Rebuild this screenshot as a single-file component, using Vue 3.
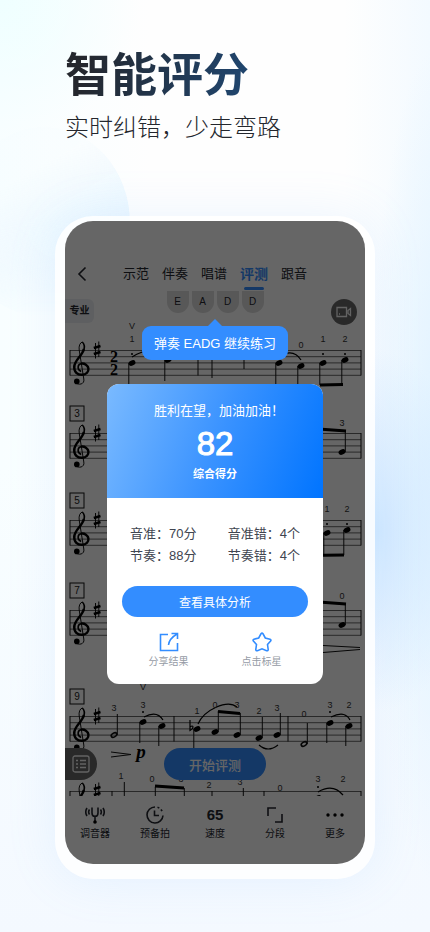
<template>
  <main class="page">
    <header class="intro">
      <h1 class="intro-title">智能评分</h1>
      <p class="intro-text">实时纠错，少走弯路</p>
    </header>

    <section class="phone">
      <div class="screen">
        <nav class="nav">
          <button class="back" aria-label="返回">
            <svg viewBox="0 0 10 16" width="10" height="16">
              <path d="M8.5 1.500 2 8l6.500 6.500" class="line" />
            </svg>
          </button>
          <a
            v-for="tab in tabs"
            :key="tab"
            href="#"
            class="tab"
            :class="{ active: tab === currentTab }"
            @click.prevent="currentTab = tab"
          >{{ tab }}</a>
        </nav>

        <div class="strings">
          <span v-for="(s, i) in strings" :key="i" class="string">{{ s }}</span>
        </div>

        <div class="score">
          <svg class="sheet" viewBox="0 0 300 480">
            <defs>
              <g id="clef">
                <path class="thin" d="M10.800 29C12 34.500 5 35.500 3 32.500M10.800 29 6.200 0C5.600-4 7-7.300 9.300-8" />
                <path class="mid" d="M9.300-8C11.500-6 11.800-2.500 10.500 1" />
                <path class="fat" d="M10.800-1C9.500 6 1.600 9.500 1.200 17" />
                <path class="fat" d="M1.200 16.500C1 22 4.500 25 9 24.800S15.800 21.500 15.400 18.500 11.500 13 8.300 13.600" />
                <path class="mid" d="M8.800 13.600C4 14 4 20 8.200 21.600" />
                <circle cx="3.800" cy="31.400" r="2.800" />
              </g>
              <g id="sharp">
                <path class="thin" d="M-1.500-7V8.500M1.800-8.500V7" />
                <path class="fat" d="M-3.200-2 3.500-4M-3.200 4 3.500 2" />
              </g>
              <ellipse id="head" rx="3.600" ry="2.600" transform="rotate(-25)" />
              <ellipse id="half" class="mid hollow" rx="3" ry="1.900" transform="rotate(-30)" />
            </defs>

            <g v-for="row in rows" :key="row.top">
              <path class="staff" :d="staffPath(row.top)" />
              <path class="bar" :d="barPath(row)" />
              <use href="#clef" x="8" :y="row.top" />
              <use href="#sharp" x="32" :y="row.top" />
              <g v-if="row.no">
                <rect class="box" x="5" :y="row.top - 27" width="14" height="15" />
                <text class="number" x="12" :y="row.top - 16">{{ row.no }}</text>
              </g>
              <g v-for="(n, i) in row.notes" :key="i">
                <use :href="n.half ? '#half' : '#head'" :x="n.x" :y="n.y" />
                <path class="stem" :d="stemPath(n)" />
                <circle v-if="n.dot" :cx="n.x" :cy="n.dot" r="1" />
              </g>
              <path v-for="b in row.beams" :key="b" class="beam" :d="b" />
              <path v-for="s in row.slurs" :key="s" class="slur" :d="s" />
              <text v-for="([t, x, y], i) in row.fingers" :key="'f' + i" class="finger" :x="x" :y="y">{{ t }}</text>
            </g>

            <text class="meter" x="49" y="46">2</text>
            <text class="meter" x="49" y="59">2</text>
            <path class="stem" d="M147 40V62M179 40V53" />
            <path class="thin" d="M258 329.500 295 331.500M258 336.500 295 333.500" />
            <path class="thin" d="M46 436 66 438.500 46 441" />
            <path class="slur" d="M125 404V414.500C129 412.500 129 408 125 411" />
            <text class="dynamic" x="76" y="442">p</text>
          </svg>

          <span class="level">专业</span>
          <button class="camera" aria-label="录像">
            <svg viewBox="0 0 16 12" width="16" height="12">
              <path d="M1 1.500H10.500V10.500H1ZM12 4.500 14.500 2.500V9.500L12 7.500ZM3 8H4" />
            </svg>
          </button>
          <button class="list" aria-label="目录">
            <svg viewBox="0 0 18 18" width="18" height="18">
              <rect x="1" y="1" width="16" height="16" rx="2" />
              <path d="M4 5.500H6M8 5.500H14M4 9H6M8 9H14M4 12.500H6M8 12.500H14" />
            </svg>
          </button>
          <button class="start">开始评测</button>
        </div>

        <footer class="tools">
          <button class="tool">
            <svg viewBox="0 0 20 18" width="20" height="18">
              <path class="line" d="M7 1.500V7C7 11.500 13 11.500 13 7V1.500M10 10.500V15M4.500 3.500Q2.800 6 4.500 8.500M2 2Q-.5 6 2 10M15.500 3.500Q17.200 6 15.500 8.500M18 2Q20.500 6 18 10" />
              <circle cx="10" cy="16" r="1.800" />
            </svg>
            <span>调音器</span>
          </button>
          <button class="tool">
            <svg viewBox="0 0 20 20" width="20" height="20">
              <path class="line" d="M10 2A8 8 0 1 0 18 10.500M9.500 5.500V10.500H14" />
              <path class="line dashed" d="M12.500 2.300A8 8 0 0 1 17.800 8" />
            </svg>
            <span>预备拍</span>
          </button>
          <button class="tool">
            <strong class="tempo">65</strong>
            <span>速度</span>
          </button>
          <button class="tool">
            <svg viewBox="0 0 18 18" width="18" height="18">
              <path class="line" d="M2 10V2H10M16 8V16H9" />
            </svg>
            <span>分段</span>
          </button>
          <button class="tool">
            <svg viewBox="0 0 20 6" width="20" height="6">
              <circle cx="3" cy="3" r="1.700" />
              <circle cx="10" cy="3" r="1.700" />
              <circle cx="17" cy="3" r="1.700" />
            </svg>
            <span>更多</span>
          </button>
        </footer>

        <div class="overlay">
          <div class="tip">弹奏 EADG 继续练习</div>

          <div class="modal" role="dialog">
            <div class="modal-head">
              <p class="cheer">胜利在望，加油加油！</p>
              <strong class="points">82</strong>
              <p class="points-label">综合得分</p>
            </div>
            <div class="modal-body">
              <div class="stats">
                <p v-for="stat in stats" :key="stat.label">{{ stat.label }}：{{ stat.value }}</p>
              </div>
              <button class="detail">查看具体分析</button>
              <div class="actions">
                <button class="action">
                  <svg viewBox="0 0 20 20" width="20" height="20">
                    <path d="M9 2.500H1.500V18.500H18.500V11M12.500 1.500H18.500V7M18 2C13 5 10 8 9.500 13" />
                  </svg>
                  <span>分享结果</span>
                </button>
                <button class="action">
                  <svg viewBox="0 0 20 20" width="20" height="20">
                    <path d="M9 1.800Q10 .4 11 1.800L13.300 6 18 7.200Q19.500 7.800 18.600 9L15.500 12.500 16.200 17.500Q16.200 19 14.600 18.700L10 16.800 5.400 18.700Q3.800 19 3.800 17.500L4.500 12.500 1.400 9Q.5 7.800 2 7.200L6.700 6Z" />
                  </svg>
                  <span>点击标星</span>
                </button>
              </div>
            </div>
          </div>
        </div>
      </div>
    </section>
  </main>
</template>

<script setup>
import { ref } from "vue"

const tabs = ["示范", "伴奏", "唱谱", "评测", "跟音"]
const currentTab = ref("评测")

const strings = ["E", "A", "D", "D"]

const stats = [
  { label: "音准", value: "70分" },
  { label: "音准错", value: "4个" },
  { label: "节奏", value: "88分" },
  { label: "节奏错", value: "4个" },
]

// end = y where the stem stops, above the head it goes up on the right side
const rows = [
  {
    top: 34,
    bars: [133],
    notes: [
      { x: 67, y: 47, end: 70, dot: 38 },
      { x: 103, y: 44, end: 65 },
      { x: 214, y: 47, end: 70 },
      { x: 236, y: 50, end: 70 },
      { x: 258, y: 47, end: 69, dot: 38 },
      { x: 280, y: 44, end: 69, dot: 38 },
    ],
    beams: ["M255 69 278 68.500"],
    slurs: ["M67 41Q82 31 100 37", "M214 40Q229 32 236 44"],
    fingers: [["V", 67, 13], ["1", 67, 26], ["0", 236, 32], ["1", 258, 26], ["2", 280, 26]],
  },
  {
    top: 117,
    no: 3,
    notes: [{ x: 277, y: 136, end: 115 }],
    beams: ["M240 112 281 115"],
    fingers: [["3", 277, 110]],
  },
  {
    top: 204,
    no: 5,
    notes: [
      { x: 262, y: 217, end: 239, dot: 208 },
      { x: 282, y: 214, end: 239, dot: 208 },
    ],
    beams: ["M240 239.500 279 239"],
    fingers: [["1", 262, 196], ["2", 282, 196]],
  },
  {
    top: 294,
    no: 7,
    notes: [{ x: 277, y: 309, end: 288 }],
    beams: ["M240 285 281 288"],
    fingers: [["0", 277, 283]],
  },
  {
    top: 400,
    no: 9,
    bars: [109, 223],
    notes: [
      { x: 49, y: 419, end: 398, half: true },
      { x: 78, y: 406, end: 427, dot: 396 },
      { x: 97, y: 410, end: 430 },
      { x: 132, y: 413, end: 434 },
      { x: 150, y: 416, end: 395 },
      { x: 172, y: 419, end: 397 },
      { x: 194, y: 422, end: 401 },
      { x: 212, y: 419, end: 397 },
      { x: 239, y: 428, end: 407, half: true },
      { x: 265, y: 407, end: 427, dot: 396 },
      { x: 284, y: 410, end: 430 },
    ],
    beams: ["M153 395.500 175 397.500"],
    slurs: [
      "M79 401Q92 394 98 404",
      "M133 408C139 394 162 383 172 391",
      "M194 429Q203 437 213 429",
      "M266 401Q280 394 285 404",
    ],
    fingers: [
      ["3", 49, 395], ["V", 78, 374], ["3", 78, 392], ["1", 132, 398],
      ["0", 150, 392], ["3", 172, 392], ["2", 194, 398], ["3", 212, 395],
      ["0", 239, 401], ["3", 265, 392], ["2", 284, 392],
    ],
  },
  {
    top: 475,
    bars: [47, 147, 199],
    notes: [
      { x: 56, y: 488, end: 466 },
      { x: 87, y: 492, end: 471 },
      { x: 116, y: 493, end: 472 },
      { x: 175, y: 492, end: 472 },
      { x: 253, y: 482, end: 490, dot: 471 },
    ],
    beams: ["M90 470 119 472"],
    slurs: ["M253 476Q268 467 278 479"],
    fingers: [
      ["1", 56, 463], ["0", 87, 466], ["3", 116, 466], ["2", 144, 472],
      ["3", 175, 469], ["0", 215, 475], ["3", 253, 466], ["2", 278, 466],
    ],
  },
]

const staffPath = (top) =>
  [0, 1, 2, 3, 4].map((i) => `M5 ${top + 0.5 + i * 6.2}H296`).join("")

const barPath = (row) =>
  [5, ...(row.bars || []), 296].map((x) => `M${x} ${row.top}v25.500`).join("")

const stemPath = (n) => `M${n.end < n.y ? n.x + 3.3 : n.x - 3.2} ${n.y}V${n.end}`
</script>

<style>
body {
  margin: 0;
}
</style>

<style scoped>
.page {
  position: relative;
  min-height: 100vh;
  box-sizing: border-box;
  padding: 47px 55px 53px;
  overflow: hidden;
  font-family: "Liberation Sans", "Noto Sans CJK SC", sans-serif;
  background:
    radial-gradient(circle at 0 0, #efffff 0, rgba(248, 255, 255, 0) 140px),
    radial-gradient(ellipse 100px 180px at 88% 57%, #d2e9ff 0, rgba(225, 241, 255, 0) 100%),
    radial-gradient(ellipse 70px 420px at 102% 50%, #e0f2ff 0, rgba(236, 247, 255, 0) 100%),
    linear-gradient(0deg, #f4f9ff 0, rgba(250, 253, 255, 0) 50%),
    linear-gradient(90deg, #f8feff 0, #fefefe 35%, #fefefe 80%, #f3faff 100%);
}

.page::before {
  content: "";
  position: absolute;
  top: 127px;
  left: -42px;
  width: 172px;
  height: 190px;
  border-radius: 50%;
  background: linear-gradient(150deg, rgba(244, 252, 255, 0.2) 30%, #e6f5ff 75%);
  mask-image: linear-gradient(#000 50%, transparent);
}

p,
h1 {
  margin: 0;
}

button {
  border: 0;
  padding: 0;
  background: none;
  font: inherit;
  color: inherit;
  cursor: pointer;
}

svg {
  display: block;
}

.intro {
  position: relative;
  padding-left: 10px;
}

.intro-title {
  width: max-content;
  font-size: 46px;
  line-height: 56px;
  font-weight: 700;
  background: linear-gradient(100deg, #24272d 10%, #20456d 95%);
  -webkit-background-clip: text;
  background-clip: text;
  color: transparent;
}

.intro-text {
  margin-top: 7px;
  font-family: "Noto Sans CJK SC", sans-serif;
  font-size: 24px;
  line-height: 32px;
  font-weight: 300;
  color: #24272d;
}

.phone {
  position: relative;
  margin-top: 74px;
  padding: 5px 10px 15px;
  border-radius: 38px;
  background: rgba(255, 255, 255, 0.8);
  box-shadow: 0 0 50px rgba(120, 185, 255, 0.14);
}

.screen {
  position: relative;
  overflow: hidden;
  border-radius: 28px;
  padding-top: 37px;
  background: #fff;
  color: #24262e;
}

.nav {
  display: flex;
  gap: 13px;
  height: 32px;
}

.back {
  width: 45px;
  padding-left: 12px;
}

.line {
  fill: none;
  stroke: #24262e;
  stroke-width: 1.6;
}

.dashed {
  stroke-dasharray: 2 2;
}

.tab {
  position: relative;
  font-size: 13px;
  line-height: 32px;
  color: #24262e;
  text-decoration: none;
}

.tab.active {
  font-size: 14px;
  font-weight: 700;
  color: #338dff;
}

.tab.active::after {
  content: "";
  position: absolute;
  left: 50%;
  bottom: 0;
  width: 20px;
  height: 3px;
  margin-left: -10px;
  border-radius: 2px;
  background: #338dff;
}

.strings {
  display: flex;
  justify-content: center;
  gap: 3px;
  margin: 1px 0 3px;
}

.string {
  width: 22px;
  height: 22px;
  border-radius: 0 0 11px 11px;
  background: #dcdcdc;
  font-size: 10px;
  line-height: 22px;
  text-align: center;
}

.score {
  position: relative;
}

.sheet {
  width: 100%;
  height: auto;
}

.sheet path {
  fill: none;
  stroke: #000;
}

.sheet .staff {
  stroke-width: 1;
  stroke: #666;
}

.sheet .bar,
.sheet .stem,
.sheet .thin,
.sheet .box {
  stroke: #111;
  stroke-width: 1;
}

.sheet .box,
.sheet .hollow {
  fill: none;
  stroke: #111;
}

.sheet .mid {
  stroke-width: 1.6;
}

.sheet .slur {
  stroke-width: 1.2;
}

.sheet .fat {
  stroke-width: 2.4;
}

.sheet .beam {
  stroke-width: 3;
}

.sheet text {
  text-anchor: middle;
}

.finger {
  font-size: 9px;
  fill: #333;
}

.number {
  font-size: 10px;
  fill: #222;
}

.meter {
  font: bold 16px "Liberation Serif", serif;
}

.dynamic {
  font: italic bold 19px "Liberation Serif", serif;
}

.level {
  position: absolute;
  top: -17px;
  left: 0;
  width: 29px;
  border-radius: 0 6px 6px 0;
  background: #eceef2;
  font-size: 10px;
  line-height: 24px;
  font-weight: 700;
  text-align: center;
}

.camera {
  position: absolute;
  top: -17px;
  right: 8px;
  display: flex;
  align-items: center;
  justify-content: center;
  width: 26px;
  height: 26px;
  border-radius: 50%;
  background: #686868;
}

.camera svg,
.list svg {
  fill: none;
  stroke: #f5f5f5;
  stroke-width: 1.3;
}

.list {
  position: absolute;
  left: 0;
  bottom: 16px;
  display: flex;
  align-items: center;
  justify-content: center;
  width: 32px;
  height: 32px;
  border-radius: 0 16px 16px 0;
  background: #686868;
}

.start {
  position: absolute;
  left: 33%;
  right: 33%;
  bottom: 16px;
  height: 32px;
  border-radius: 16px;
  background: #338dff;
  color: #fff;
  font-size: 13px;
  font-weight: 500;
}

.tools {
  display: grid;
  grid-template-columns: repeat(5, 1fr);
  padding: 8px 0 22px;
}

.tool {
  display: grid;
  grid-template-rows: 22px 16px;
  place-items: center;
  font-size: 10px;
  line-height: 16px;
}

.tempo {
  font-size: 15px;
}

.overlay {
  position: absolute;
  inset: 0;
  display: flex;
  flex-direction: column;
  align-items: center;
  padding-top: 105px;
  background: rgba(0, 0, 0, 0.6);
}

.tip {
  position: relative;
  padding: 1px 12px 0;
  border-radius: 9px;
  background: #338dff;
  color: #fff;
  font-size: 13px;
  line-height: 33px;
}

.tip::before {
  content: "";
  position: absolute;
  left: 50%;
  bottom: 100%;
  margin-left: -7px;
  border: 7px solid transparent;
  border-top: 0;
  border-bottom-color: #338dff;
}

.modal {
  width: 72%;
  margin-top: 24px;
  border-radius: 12px;
  overflow: hidden;
  background: #fff;
  color: #404550;
}

.modal-head {
  display: flex;
  flex-direction: column;
  align-items: center;
  padding: 17px 0 16px;
  background: linear-gradient(110deg, #7abaff 0, #3992ff 52%, #0074ff 100%);
  color: #fff;
}

.cheer {
  padding-left: 8px;
  font-size: 13px;
  line-height: 20px;
}

.points {
  font-size: 33px;
  line-height: 46px;
  font-weight: 400;
  -webkit-text-stroke: 1px #fff;
}

.points-label {
  font-size: 11px;
  line-height: 15px;
  font-weight: 700;
}

.modal-body {
  padding: 25px 15px 14px;
}

.stats {
  display: grid;
  grid-template-columns: auto auto;
  justify-content: space-between;
  padding: 0 8px;
  font-size: 13px;
  line-height: 22px;
}

.detail {
  width: 100%;
  height: 31px;
  margin-top: 19px;
  border-radius: 16px;
  background: #338dff;
  color: #fff;
  font-size: 12px;
}

.actions {
  display: grid;
  grid-template-columns: 1fr 1fr;
  margin-top: 15px;
}

.action {
  display: grid;
  justify-items: center;
  gap: 2px;
  color: #959ba5;
  font-size: 10px;
  line-height: 16px;
}

.action svg {
  fill: none;
  stroke: #338dff;
  stroke-width: 1.6;
}
</style>
